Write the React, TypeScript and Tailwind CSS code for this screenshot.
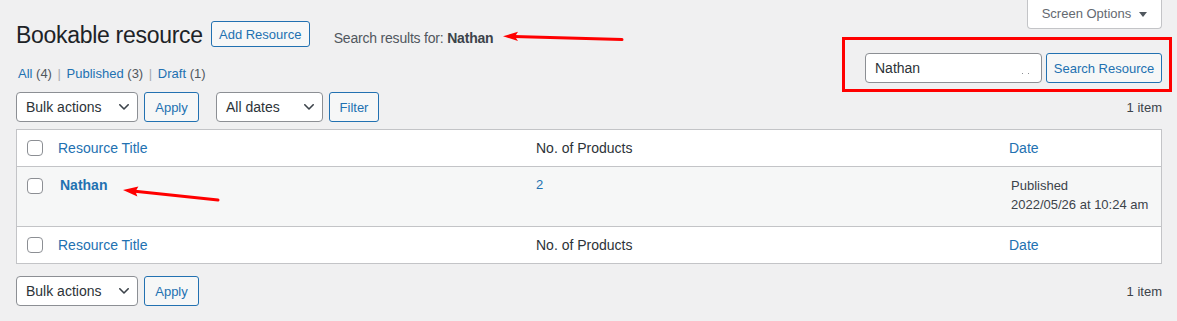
import React from "react";

function Chevron() {
  return (
    <svg width="10" height="6" viewBox="0 0 10 6" className="shrink-0">
      <polyline points="0.8,0.8 5,5 9.2,0.8" fill="none" stroke="#3c434a" strokeWidth="1.6" strokeLinecap="round" strokeLinejoin="round" />
    </svg>
  );
}

function Select({ label, w }: { label: string; w: string }) {
  return (
    <div className={`${w} h-[30px] bg-white border border-[#8c8f94] rounded-[4px] flex items-center justify-between pl-[9px] pr-[8px] text-[14px] text-[#2c3338]`}>
      <span className="pt-[1px]">{label}</span>
      <Chevron />
    </div>
  );
}

function Btn({ label, w, h = "h-[30px]" }: { label: string; w: string; h?: string }) {
  return (
    <div className={`${w} ${h} bg-[#f6f7f7] border border-[#2271b1] rounded-[3px] flex items-center justify-center text-[13px] text-[#2271b1]`}>
      <span className="pt-[1px]">{label}</span>
    </div>
  );
}

function Checkbox() {
  return <div className="w-[16px] h-[16px] bg-white border border-[#8c8f94] rounded-[4px]" />;
}

function HeadRow({ bottom }: { bottom?: boolean }) {
  return (
    <div className={`grid grid-cols-[31px_478px_473px_1fr] items-center text-[14px] ${bottom ? "h-[36px]" : "h-[37px] border-b border-[#c3c4c7]"}`}>
      <div className="pl-[10px] flex items-center">
        <Checkbox />
      </div>
      <div className="pl-[10px] text-[#2271b1]">Resource Title</div>
      <div className="pl-[10px] text-[#2c3338]">No. of Products</div>
      <div className="pl-[10px] text-[#2271b1]">Date</div>
    </div>
  );
}

export default function App() {
  return (
    <div className="w-[1177px] h-[321px] overflow-hidden bg-[#f0f0f1] font-['Liberation_Sans',Arial,sans-serif] text-[13px] text-[#3c434a]">
      <div className="pl-[16px] pr-[15px]">
        {/* top section */}
        <div className="flex justify-between h-[92px]">
          <div className="flex flex-col">
            <div className="mt-[21px] h-[26px] flex items-center">
              <h1 className="text-[23px] leading-[26px] text-[#1d2327] font-normal pt-[2px] tracking-[-0.3px]">Bookable resource</h1>
              <div className="ml-[8px] w-[99px] h-[26px] bg-[#f6f7f7] border border-[#2271b1] rounded-[3px] flex items-center justify-center text-[13px] text-[#2271b1]">
                <span className="pt-[2px]">Add Resource</span>
              </div>
              <div className="ml-[24px] pt-[8px] text-[14px] text-[#50575e] tracking-[-0.2px]">
                Search results for: <span className="font-bold text-[#3c434a]">Nathan</span>
              </div>
              <svg width="124" height="14" viewBox="0 0 124 14" className="ml-[9px] mt-[8px] shrink-0">
                <line x1="12" y1="5.6" x2="120" y2="8.6" stroke="#ff0000" strokeWidth="3" strokeLinecap="round" />
                <polygon points="1,5.2 16,0.8 13,5.6 16,10" fill="#ff0000" />
              </svg>
            </div>
            <div className="mt-[17px] leading-[20px] text-[13px] text-[#50575e] pl-[2px]">
              <span className="text-[#2271b1]">All</span> (4) <span className="mx-[2px] text-[#a7aaad]">|</span>{" "}
              <span className="text-[#2271b1]">Published</span> (3) <span className="mx-[2px] text-[#a7aaad]">|</span>{" "}
              <span className="text-[#2271b1]">Draft</span> (1)
            </div>
          </div>
          <div className="flex flex-col items-end">
            <div className="w-[135px] h-[29px] bg-white border border-t-0 border-[#c3c4c7] rounded-b-[4px] flex items-center justify-center gap-[8px] text-[13px] text-[#646970]">
              <span>Screen Options</span>
              <svg width="8" height="5" viewBox="0 0 8 5">
                <polygon points="0,0 8,0 4,5" fill="#50575e" />
              </svg>
            </div>
            <div className="mt-[8px] mr-[-10px] w-[330px] h-[55px] border-[3px] border-[#ff0000] pt-[13px] pl-[20px] pr-[7px] flex gap-[4px]">
              <div className="w-[177px] h-[30px] bg-white border border-[#8c8f94] rounded-[4px] flex items-center justify-between pl-[9px] pr-[12px] text-[14px] text-[#2c3338]">
                <span>Nathan</span>
                <span className="flex gap-[5px] mt-[10px]">
                  <span className="w-[1px] h-[1px] bg-[#8c8f94]" />
                  <span className="w-[1px] h-[1px] bg-[#8c8f94]" />
                </span>
              </div>
              <Btn label="Search Resource" w="w-[116px]" />
            </div>
          </div>
        </div>

        {/* tablenav top */}
        <div className="h-[30px] flex items-center justify-between">
          <div className="flex items-center">
            <Select label="Bulk actions" w="w-[122px]" />
            <div className="ml-[6px]"><Btn label="Apply" w="w-[55px]" /></div>
            <div className="ml-[17px]"><Select label="All dates" w="w-[107px]" /></div>
            <div className="ml-[6px]"><Btn label="Filter" w="w-[50px]" /></div>
          </div>
          <div className="text-[13px] text-[#3c434a] pt-[2px]">1 item</div>
        </div>

        {/* table */}
        <div className="mt-[7px] bg-white border border-[#c3c4c7]">
          <HeadRow />
          <div className="grid grid-cols-[31px_478px_473px_1fr] h-[60px] items-start bg-[#f6f7f7] border-b border-[#c3c4c7]">
            <div className="pl-[10px] pt-[11px]">
              <Checkbox />
            </div>
            <div className="relative pl-[12px] pt-[8px] leading-[20px] text-[14px] font-bold text-[#2271b1]">
              Nathan
              <svg width="102" height="22" viewBox="0 0 102 22" className="absolute left-[72px] top-[15px]">
                <line x1="15" y1="9.3" x2="98" y2="18" stroke="#ff0000" strokeWidth="3" strokeLinecap="round" />
                <polygon points="3,8 18.4,4.4 15.5,9.5 17.4,14.4" fill="#ff0000" />
              </svg>
            </div>
            <div className="pl-[10px] pt-[8px] leading-[20px] text-[13px] text-[#2271b1]">2</div>
            <div className="pl-[12px] pt-[9px] leading-[19px] text-[13px] text-[#3c434a]">
              <div>Published</div>
              <div>2022/05/26 at 10:24 am</div>
            </div>
          </div>
          <HeadRow bottom />
        </div>

        {/* tablenav bottom */}
        <div className="mt-[12px] h-[30px] flex items-center justify-between">
          <div className="flex items-center">
            <Select label="Bulk actions" w="w-[122px]" />
            <div className="ml-[6px]"><Btn label="Apply" w="w-[55px]" /></div>
          </div>
          <div className="text-[13px] text-[#3c434a] pt-[2px]">1 item</div>
        </div>
      </div>
    </div>
  );
}
